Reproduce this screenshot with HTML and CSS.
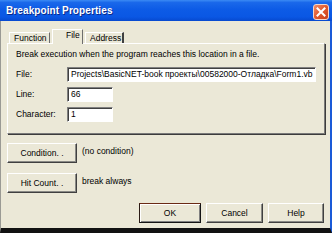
FILE: index.html
```html
<!DOCTYPE html>
<html>
<head>
<meta charset="utf-8">
<link rel="stylesheet" href="styles.css">
</head>
<body>
<div class="window">
  <div class="titlebar">
    <span class="title">Breakpoint Properties</span>
    <span class="close"><svg width="10" height="10" viewBox="0 0 10 10"><path d="M1.5 1.5 L8.5 8.5 M8.5 1.5 L1.5 8.5" stroke="#fff" stroke-width="2" stroke-linecap="square"/></svg></span>
  </div>
  <div class="client">
    <div class="tabs">
      <div class="tab tab-function">Function</div>
      <div class="tab tab-file active">File</div>
      <div class="tab tab-address">Address</div>
    </div>
    <div class="panel">
      <p class="intro">Break execution when the program reaches this location in a file.</p>
      <div class="form">
        <span class="label">File:</span>
        <div class="input wide">Projects\BasicNET-book проекты\00582000-Отладка\Form1.vb</div>
        <span class="label">Line:</span>
        <div class="input short">66</div>
        <span class="label">Character:</span>
        <div class="input short">1</div>
      </div>
    </div>
    <div class="cond-row first">
      <button class="btn side">Condition. .</button>
      <span class="note">(no condition)</span>
    </div>
    <div class="cond-row">
      <button class="btn side">Hit Count. .</button>
      <span class="note">break always</span>
    </div>
    <div class="actions">
      <button class="btn default ok">OK</button>
      <button class="btn cancel">Cancel</button>
      <button class="btn help">Help</button>
    </div>
  </div>
</div>
</body>
</html>
```
FILE: styles.css
```css
html, body {
  margin: 0;
  padding: 0;
  background: #000;
}
.window {
  width: 332px;
  height: 233px;
  display: flex;
  flex-direction: column;
  font-family: "Liberation Sans", Arial, sans-serif;
  font-size: 8.5px;
  color: #000;
  overflow: hidden;
}
.titlebar {
  height: 21px;
  flex: none;
  display: flex;
  align-items: center;
  justify-content: space-between;
  padding: 0 3px 0 6px;
  background: linear-gradient(#3b8af4 0%, #1a68ea 12%, #0d5be6 45%, #0a57e4 80%, #0749cf 100%);
  box-sizing: border-box;
}
.title {
  color: #fff;
  font-weight: bold;
  font-size: 10px;
  letter-spacing: 0.1px;
  text-shadow: 1px 1px 0 #0a2a8a;
}
.close {
  width: 16px;
  height: 16px;
  margin-top: 2px;
  box-sizing: border-box;
  border: 1px solid #f4d6c8;
  border-radius: 3px;
  background: linear-gradient(135deg, #ef8d6a 0%, #e0582c 50%, #c8401c 100%);
  display: flex;
  align-items: center;
  justify-content: center;
}
.client {
  flex: 1;
  background: #ebe8d7;
  border-left: 1px solid #9a9a94;
  border-right: 2px solid #1a5ad8;
  border-bottom: 5px solid #121212;
  padding: 8px 6px 0 6px;
  display: flex;
  flex-direction: column;
}
.tabs {
  display: flex;
  height: 14px;
  padding-left: 2px;
  align-items: flex-end;
  position: relative;
  z-index: 1;
}
.tab {
  height: 11px;
  box-sizing: border-box;
  border-top: 1px solid #fff;
  border-left: 1px solid #fff;
  border-right: 1px solid #6e6e6e;
  line-height: 10px;
  padding-left: 4px;
  font-size: 8.5px;
  margin-bottom: 0;
}
.tab-function { width: 41px; }
.tab-file { width: 31px; margin-left: 2px; }
.tab-address { width: 39px; margin-left: 2px; border-right: 2px solid #404040; }
.tab.active {
  height: 15px;
  margin-bottom: -1px;
  background: #ebe8d7;
  line-height: 11px;
  padding-left: 13px;
}
.panel {
  width: 318px;
  height: 91px;
  box-sizing: border-box;
  border-top: 1px solid #fff;
  border-left: 1px solid #fff;
  border-right: 1px solid #7a7a7a;
  border-bottom: 1px solid #7a7a7a;
  box-shadow: 1px 1px 0 #3c3c3c;
  padding: 5px 8px 0 8px;
}
.intro {
  margin: 0 0 7px 0;
  height: 11px;
  line-height: 11px;
  white-space: nowrap;
}
.form {
  display: grid;
  grid-template-columns: 51px auto;
  row-gap: 5px;
  align-items: center;
}
.label {
  line-height: 15px;
}
.input {
  height: 15px;
  box-sizing: border-box;
  background: #fff;
  border-top: 1px solid #808080;
  border-left: 1px solid #808080;
  border-right: 1px solid #fff;
  border-bottom: 1px solid #fff;
  box-shadow: inset 1px 1px 0 #404040;
  line-height: 13px;
  padding-left: 3px;
  white-space: nowrap;
  overflow: hidden;
}
.input.wide { width: 249px; }
.input.short { width: 46px; }
.btn {
  font-family: "Liberation Sans", Arial, sans-serif;
  font-size: 8.5px;
  height: 20px;
  box-sizing: border-box;
  background: #ebe8d7;
  border-top: 1px solid #fff;
  border-left: 1px solid #fff;
  border-right: 1px solid #404040;
  border-bottom: 1px solid #404040;
  box-shadow: inset -1px -1px 0 #8a8a86;
  padding: 0;
  margin: 0;
  color: #000;
}
.cond-row {
  display: flex;
  align-items: center;
  gap: 5px;
  margin-top: 10px;
}
.cond-row.first { margin-top: 9px; }
.btn.side { width: 70px; }
.note {
  line-height: 11px;
  margin-top: -3px;
}
.actions {
  display: flex;
  justify-content: flex-end;
  gap: 5px;
  margin-top: 10px;
}
.btn.ok {
  width: 62px;
  border-top: 1px solid #6a2a14;
  border-left: 1px solid #2a1a14;
  border-right: 1px solid #141414;
  border-bottom: 1px solid #141414;
  box-shadow: inset 1px 1px 0 #fff, inset -1px -1px 0 #808080;
}
.btn.cancel { width: 57px; }
.btn.help { width: 56px; }
```
